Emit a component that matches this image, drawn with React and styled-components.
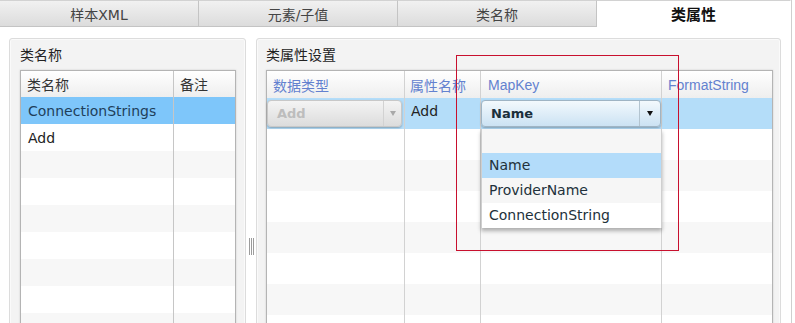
import React from 'react';
import styled, { createGlobalStyle } from 'styled-components';

const GlobalStyle = createGlobalStyle`
  html, body {
    margin: 0;
    padding: 0;
    background: #fff;
  }
  body {
    font-family: "DejaVu Sans", "Noto Sans CJK SC", sans-serif;
    font-size: 14px;
    color: #222;
  }
`;

const Frame = styled.div`
  width: 791px;
  height: 323px;
  border-right: 1px solid #cfcfcf;
  overflow: hidden;
  display: flex;
  flex-direction: column;
`;

const TabBar = styled.div`
  display: flex;
  height: 27px;
  flex: none;
`;

const Tab = styled.div`
  flex: ${p => (p.$last ? '1 1 auto' : '0 0 199px')};
  box-sizing: border-box;
  display: flex;
  align-items: center;
  justify-content: center;
  border-top: 1px solid #d2d2d2;
  border-right: 1px solid ${p => (p.$last ? 'transparent' : '#c4c4c4')};
  border-bottom: 1px solid ${p => (p.$active ? 'transparent' : '#c4c4c4')};
  background: ${p => (p.$active ? '#fff' : 'linear-gradient(#f1f1f1, #dcdcdc)')};
  color: ${p => (p.$active ? '#111' : '#444')};
  font-weight: ${p => (p.$active ? 'bold' : 'normal')};
  font-size: ${p => (p.$active ? '15px' : '14px')};
`;

const Body = styled.div`
  display: flex;
  align-items: flex-start;
  padding: 11px 0 0 9px;
  flex: 1;
`;

const Panel = styled.section`
  position: relative;
  flex: none;
  box-sizing: border-box;
  width: ${p => p.$width}px;
  height: 330px;
  padding: 4px ${p => p.$padRight}px 0 ${p => p.$padLeft}px;
  background: #f3f3f3;
  border: 1px solid #dcdcdc;
  border-radius: 3px 3px 0 0;
  box-shadow: inset 0 0 0 1px #fafafa;
`;

const PanelTitle = styled.div`
  height: 24px;
  line-height: 24px;
  margin-bottom: 3px;
  font-size: 14px;
  color: #222;
`;

const Splitter = styled.div`
  flex: 0 0 10px;
  display: flex;
  justify-content: center;
  padding-top: 200px;
`;

const Grip = styled.div`
  width: 5px;
  height: 17px;
  background: repeating-linear-gradient(90deg, #9c9c9c 0 1px, transparent 1px 2px);
`;

const Table = styled.div`
  background: #fff;
  border: 1px solid #b4b4b4;
  border-bottom: none;
  box-shadow: 0 0 2px rgba(0, 0, 0, 0.15);
`;

const Row = styled.div`
  display: grid;
  grid-template-columns: ${p => p.$cols};
  height: ${p => p.$h}px;
  background: ${p => (p.$bg ? p.$bg : '#fff')};
`;

const HeadRow = styled(Row)`
  background: linear-gradient(#ffffff, #eeeeee);
  color: ${p => p.$color};
  font-family: ${p => p.$font};
`;

const Cell = styled.div`
  position: relative;
  box-sizing: border-box;
  display: flex;
  align-items: ${p => (p.$top ? 'flex-start' : 'center')};
  padding: ${p => p.$pad || '0 6px'};
  border-right: 1px solid ${p => p.$line || '#d2d2d2'};
  white-space: nowrap;
  color: ${p => p.$color || 'inherit'};

  &:last-child {
    border-right: none;
  }
`;

const CellText = styled.span`
  line-height: ${p => p.$lh || 27}px;
  overflow: hidden;
`;

const Combo = styled.div`
  box-sizing: border-box;
  flex: 1;
  height: 27px;
  margin-top: 2px;
  display: flex;
  border: 1px solid ${p => (p.$disabled ? '#c8c8c8' : '#9fb4c4')};
  border-radius: 4px;
  background: ${p =>
    p.$disabled ? 'linear-gradient(#f4f4f4, #dcdcdc)' : 'linear-gradient(#f3f9fd, #cbe2f3)'};
  box-shadow: 0 1px 2px rgba(0, 0, 0, 0.28);
  color: ${p => (p.$disabled ? '#bdbdbd' : '#1b2f3b')};
  font-weight: bold;
  font-size: 13px;
`;

const ComboText = styled.span`
  flex: 1;
  display: flex;
  align-items: center;
  padding-left: 9px;
`;

const ComboButton = styled.span`
  flex: 0 0 ${p => p.$w}px;
  display: flex;
  align-items: center;
  justify-content: center;
  border-left: 1px solid ${p => (p.$disabled ? '#d2d2d2' : '#b3c4d0')};

  &::after {
    content: '';
    border-left: 3px solid transparent;
    border-right: 3px solid transparent;
    border-top: 5px solid ${p => (p.$disabled ? '#a9a9a9' : '#111')};
  }
`;

const DropList = styled.ul`
  position: absolute;
  top: 100%;
  left: 0;
  right: -1px;
  z-index: 2;
  margin: 0;
  padding: 0;
  list-style: none;
  background: #fff;
  border-left: 1px solid #cfcfcf;
  border-right: 1px solid #cfcfcf;
  box-shadow: 0 3px 4px rgba(0, 0, 0, 0.3);
`;

const DropItem = styled.li`
  height: 25px;
  line-height: 25px;
  padding-left: 7px;
  color: #22313b;
  background: ${p => (p.$selected ? '#b3dcfa' : p.$shade ? '#f6f6f6' : '#fff')};

  &:first-child {
    height: 24px;
  }
`;

const Marker = styled.div`
  position: absolute;
  left: 199px;
  top: 16px;
  box-sizing: border-box;
  width: 223px;
  height: 196px;
  border: 1px solid #c8102e;
  z-index: 3;
  pointer-events: none;
`;

const LEFT_COLS = '153px 1fr';
const RIGHT_COLS = '138px 76px 181px 1fr';
const STRIPE = '#f7f7f7';

const rowBg = (i, selectedColor) => {
  if (i === 0) return selectedColor;
  return i % 2 === 0 ? STRIPE : '#fff';
};

const leftRows = ['ConnectionStrings', 'Add', '', '', '', '', '', '', ''];
const options = ['', 'Name', 'ProviderName', 'ConnectionString'];

const ClassList = () => (
  <Panel $width={237} $padLeft={10} $padRight={9}>
    <PanelTitle>类名称</PanelTitle>
    <Table>
      <HeadRow $cols={LEFT_COLS} $h={26} $color="#333">
        <Cell $line="#c6c6c6">类名称</Cell>
        <Cell>备注</Cell>
      </HeadRow>
      {leftRows.map((name, i) => (
        <Row key={i} $cols={LEFT_COLS} $h={27} $bg={rowBg(i, '#7ec6fa')}>
          <Cell $line="#c6c6c6" $pad="0 7px" $color={i === 0 ? '#1e3f5a' : '#222'}>
            {name}
          </Cell>
          <Cell />
        </Row>
      ))}
    </Table>
  </Panel>
);

const PropertyGrid = () => (
  <Panel $width={525} $padLeft={9} $padRight={7}>
    <PanelTitle>类属性设置</PanelTitle>
    <Table>
      <HeadRow
        $cols={RIGHT_COLS}
        $h={27}
        $color="#6381cf"
        $font={'"Liberation Sans", "Noto Sans CJK SC", sans-serif'}
      >
        <Cell>数据类型</Cell>
        <Cell $pad="0 5px">属性名称</Cell>
        <Cell $pad="0 7px">MapKey</Cell>
        <Cell>FormatString</Cell>
      </HeadRow>
      <Row $cols={RIGHT_COLS} $h={31} $bg="#b4ddf9">
        <Cell $top $pad="0 2px 0 0">
          <Combo $disabled>
            <ComboText>Add</ComboText>
            <ComboButton $w={17} $disabled />
          </Combo>
        </Cell>
        <Cell $top>
          <CellText>Add</CellText>
        </Cell>
        <Cell $top $pad="0">
          <Combo>
            <ComboText>Name</ComboText>
            <ComboButton $w={20} />
          </Combo>
          <DropList>
            {options.map((o, i) => (
              <DropItem key={i} $selected={o === 'Name'} $shade={i === 0 || i === 2}>
                {o}
              </DropItem>
            ))}
          </DropList>
        </Cell>
        <Cell />
      </Row>
      {[1, 2, 3, 4, 5, 6, 7].map(i => (
        <Row key={i} $cols={RIGHT_COLS} $h={31} $bg={rowBg(i)}>
          <Cell />
          <Cell />
          <Cell />
          <Cell />
        </Row>
      ))}
    </Table>
    <Marker />
  </Panel>
);

const App = () => (
  <Frame>
    <GlobalStyle />
    <TabBar>
      <Tab>样本XML</Tab>
      <Tab>元素/子值</Tab>
      <Tab>类名称</Tab>
      <Tab $active $last>类属性</Tab>
    </TabBar>
    <Body>
      <ClassList />
      <Splitter>
        <Grip />
      </Splitter>
      <PropertyGrid />
    </Body>
  </Frame>
);

export default App;
